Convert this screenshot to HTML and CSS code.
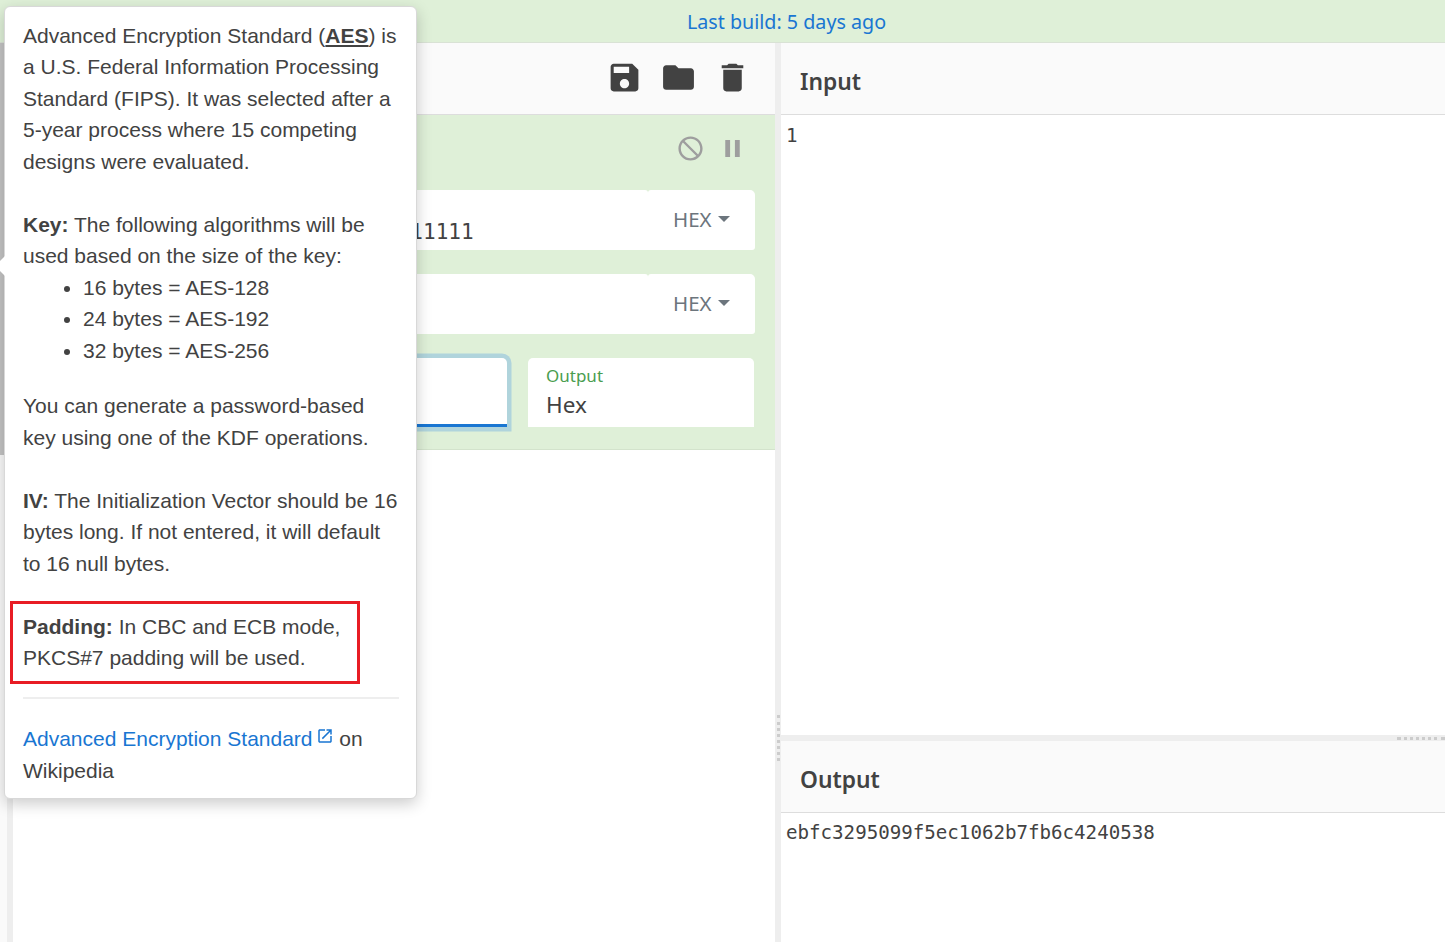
FILE: index.html
```html
<!DOCTYPE html>
<html lang="en">
<head>
    <meta charset="UTF-8">
    <meta name="viewport" content="width=device-width, initial-scale=1.0">
    <title>CyberChef</title>
    <link rel="stylesheet" href="styles.css">
</head>
<body>
    <div class="banner">Last build: 5 days ago</div>

    <div class="workspace">
        <div class="operations">
            <div class="operations-selected"></div>
        </div>
        <div class="gutter gutter-tall"><span class="handle-v"></span></div>

        <section class="recipe">
            <div class="title-bar recipe-bar">
                <svg class="tool tool-save" viewBox="0 0 24 24"><path d="M17 3H5c-1.11 0-2 .9-2 2v14c0 1.1.89 2 2 2h14c1.1 0 2-.9 2-2V7l-4-4zm-5 16c-1.66 0-3-1.34-3-3s1.34-3 3-3 3 1.34 3 3-1.34 3-3 3zm3-10H5V5h10v4z"/></svg>
                <svg class="tool tool-folder" viewBox="0 0 24 24"><path d="M10 4H4c-1.1 0-1.99.9-1.99 2L2 18c0 1.1.9 2 2 2h16c1.1 0 2-.9 2-2V8c0-1.1-.9-2-2-2h-8l-2-2z"/></svg>
                <svg class="tool tool-trash" viewBox="0 0 24 24"><path d="M6 19c0 1.1.9 2 2 2h8c1.1 0 2-.9 2-2V7H6v12zM19 4h-3.5l-1-1h-5l-1 1H5v2h14V4z"/></svg>
            </div>

            <div class="operation">
                <div class="op-controls">
                    <svg class="op-icon" viewBox="0 0 24 24"><path d="M12 2C6.48 2 2 6.48 2 12s4.48 10 10 10 10-4.48 10-10S17.52 2 12 2zm0 18c-4.42 0-8-3.58-8-8 0-1.85.63-3.55 1.69-4.9L16.9 18.31C15.55 19.37 13.85 20 12 20zm6.31-3.1L7.1 5.69C8.45 4.63 10.15 4 12 4c4.42 0 8 3.58 8 8 0 1.85-.63 3.55-1.69 4.9z"/></svg>
                    <svg class="op-icon" viewBox="0 0 24 24"><path d="M6 19h4V5H6v14zm8-14v14h4V5h-4z"/></svg>
                </div>
                <div class="arg-row">
                    <div class="arg-input mono-value">11111111111111111111111111111111</div>
                    <div class="arg-toggle">HEX<span class="caret"></span></div>
                </div>
                <div class="arg-row">
                    <div class="arg-input"></div>
                    <div class="arg-toggle">HEX<span class="caret"></span></div>
                </div>
                <div class="arg-pair">
                    <div class="arg-select arg-focus"></div>
                    <div class="arg-select">
                        <span class="arg-label">Output</span>
                        <span class="arg-text">Hex</span>
                    </div>
                </div>
            </div>
        </section>

        <div class="gutter gutter-tall"><span class="handle-v"></span></div>

        <section class="io">
            <div class="io-pane io-input">
                <div class="title-bar"><h2>Input</h2></div>
                <div class="io-text">1</div>
            </div>
            <div class="gutter-wide"><span class="handle-h"></span></div>
            <div class="io-pane io-output">
                <div class="title-bar"><h2>Output</h2></div>
                <div class="io-text">ebfc3295099f5ec1062b7fb6c4240538</div>
            </div>
        </section>
    </div>

    <div class="popover">
        <span class="popover-arrow"></span>
        <p>Advanced Encryption Standard (<b><u>AES</u></b>) is a U.S. Federal Information Processing Standard (FIPS). It was selected after a 5-year process where 15 competing designs were evaluated.</p>
        <p class="before-list"><b>Key:</b> The following algorithms will be used based on the size of the key:</p>
        <ul>
            <li>16 bytes = AES-128</li>
            <li>24 bytes = AES-192</li>
            <li>32 bytes = AES-256</li>
        </ul>
        <p>You can generate a password-based key using one of the KDF operations.</p>
        <p><b>IV:</b> The Initialization Vector should be 16 bytes long. If not entered, it will default to 16 null bytes.</p>
        <p class="last"><b>Padding:</b> In CBC and ECB mode, PKCS#7 padding will be used.</p>
        <hr>
        <div class="popover-foot">
            <a href="#">Advanced Encryption Standard<svg class="ext-icon" viewBox="0 0 24 24"><path d="M19 19H5V5h7V3H5c-1.11 0-2 .9-2 2v14c0 1.1.89 2 2 2h14c1.1 0 2-.9 2-2v-7h-2v7zM14 3v2h3.59l-9.83 9.83 1.41 1.41L19 6.41V10h2V3h-7z"/></svg></a> on Wikipedia
        </div>
        <div class="highlight"></div>
    </div>
</body>
</html>
```

FILE: styles.css
```css
* {
    box-sizing: border-box;
}
html, body {
    height: 100%;
}
body {
    margin: 0;
    display: flex;
    flex-direction: column;
    overflow: hidden;
    background-color: white;
    color: #424242;
    font-family: "Noto Sans", sans-serif;
}
.banner {
    height: 43px;
    padding-left: 128px;
    flex: none;
    background-color: #dff0d8;
    border-bottom: 1px solid #d9e2d5;
    color: #1976d2;
    font-size: 19.7px;
    line-height: 44px;
    text-align: center;
}
.workspace {
    flex: 1;
    display: flex;
    min-height: 0;
}
.operations {
    width: 7px;
    flex: none;
    background-color: #fafafa;
}
.operations-selected {
    width: 4px;
    height: 412px;
    background-color: #c4c4c4;
}
.gutter {
    width: 6px;
    flex: none;
    background-color: #eee;
}
.gutter-tall {
    display: flex;
    justify-content: center;
    padding-top: 672px;
}
.handle-v {
    height: 46px;
    border-left: 3px dotted #ccc;
}
.recipe {
    width: 762px;
    flex: none;
}
.title-bar {
    height: 72px;
    display: flex;
    align-items: center;
    padding-left: 19px;
    background-color: #fafafa;
    border-bottom: 1px solid #ddd;
}
.title-bar h2 {
    margin: 0;
    padding-top: 5px;
    font-size: 22.8px;
    font-weight: 600;
}
.recipe-bar {
    justify-content: flex-end;
    gap: 17px;
    padding-right: 24px;
    padding-bottom: 3px;
}
.tool {
    width: 37px;
    height: 37px;
    fill: #424242;
}
.operation {
    height: 335px;
    padding: 0 20px 0 20px;
    background-color: #dff0d8;
    border-bottom: 1px solid #d3e3cc;
}
.op-controls {
    height: 75px;
    display: flex;
    justify-content: flex-end;
    align-items: center;
    gap: 13px;
    padding: 0 8px 8px 0;
}
.op-icon {
    width: 29px;
    height: 29px;
    fill: #9e9e9e;
}
.arg-row {
    height: 60px;
    display: flex;
    margin-bottom: 24px;
}
.arg-input {
    flex: 1;
    background-color: white;
    border-radius: 5px 3px 0 5px;
}
.mono-value {
    padding: 26px 0 0 36px;
    font-family: "DejaVu Sans Mono", monospace;
    font-size: 21px;
    line-height: 32px;
}
.arg-toggle {
    width: 107px;
    display: flex;
    align-items: center;
    padding: 0 0 2px 25px;
    background-color: white;
    border-radius: 3px 5px 3px 0;
    color: #6c757d;
    font-size: 20.5px;
}
.caret {
    margin-left: 6px;
    border-top: 6px solid #6c757d;
    border-left: 6.5px solid transparent;
    border-right: 6.5px solid transparent;
}
.arg-pair {
    display: flex;
    gap: 21px;
    height: 69px;
}
.arg-select {
    width: 226px;
    padding: 5px 18px 0;
    background-color: white;
    border-radius: 5px 5px 0 0;
}
.arg-focus {
    width: 474px;
    border-bottom: 3px solid #1976d2;
    box-shadow: 0 0 0 4.5px #b0d4dc;
}
.arg-label {
    display: block;
    color: #4a9d4f;
    font-size: 17px;
    line-height: 26px;
}
.arg-text {
    display: block;
    margin-top: -1px;
    font-size: 22.5px;
    line-height: 34px;
}
.io {
    flex: 1;
    display: flex;
    flex-direction: column;
    min-width: 0;
}
.io-input {
    height: 692px;
}
.io-input .io-text {
    padding-top: 7px;
}
.io-output {
    flex: 1;
}
.io-text {
    padding: 6px 5px;
    font-family: "DejaVu Sans Mono", monospace;
    font-size: 19.15px;
    line-height: 28px;
}
.gutter-wide {
    height: 6px;
    display: flex;
    justify-content: flex-end;
    align-items: center;
    background-color: #eee;
}
.handle-h {
    width: 48px;
    border-top: 3px dotted #ccc;
}
.popover {
    position: absolute;
    left: 4px;
    top: 6px;
    width: 413px;
    height: 793px;
    padding: 12.9px 17px 11px 18px;
    background-color: white;
    border: 1px solid #d8d8d8;
    border-radius: 6px;
    box-shadow: 0 5px 15px rgba(0, 0, 0, 0.2);
    font-family: "Liberation Sans", Arial, sans-serif;
    font-size: 21px;
    line-height: 31.5px;
}
.popover-arrow {
    position: absolute;
    left: -7px;
    top: 252px;
    width: 14px;
    height: 14px;
    background-color: white;
    transform: rotate(45deg);
}
.popover p {
    position: relative;
    margin: 0 0 31.5px 0;
}
.popover p.before-list,
.popover p.last {
    margin-bottom: 0;
}
.popover ul {
    margin: 0 0 23.7px 0;
    padding-left: 60px;
}
.popover hr {
    height: 2px;
    margin: 23.7px 0 24px;
    border: 0;
    background-color: #eee;
}
.popover a {
    color: #1976d2;
    text-decoration: none;
}
.ext-icon {
    width: 18px;
    height: 18px;
    margin-left: 3px;
    vertical-align: 1px;
    fill: #1976d2;
}
.highlight {
    position: absolute;
    left: 5px;
    top: 594px;
    width: 350px;
    height: 83px;
    border: 3px solid #e81c24;
}
```
